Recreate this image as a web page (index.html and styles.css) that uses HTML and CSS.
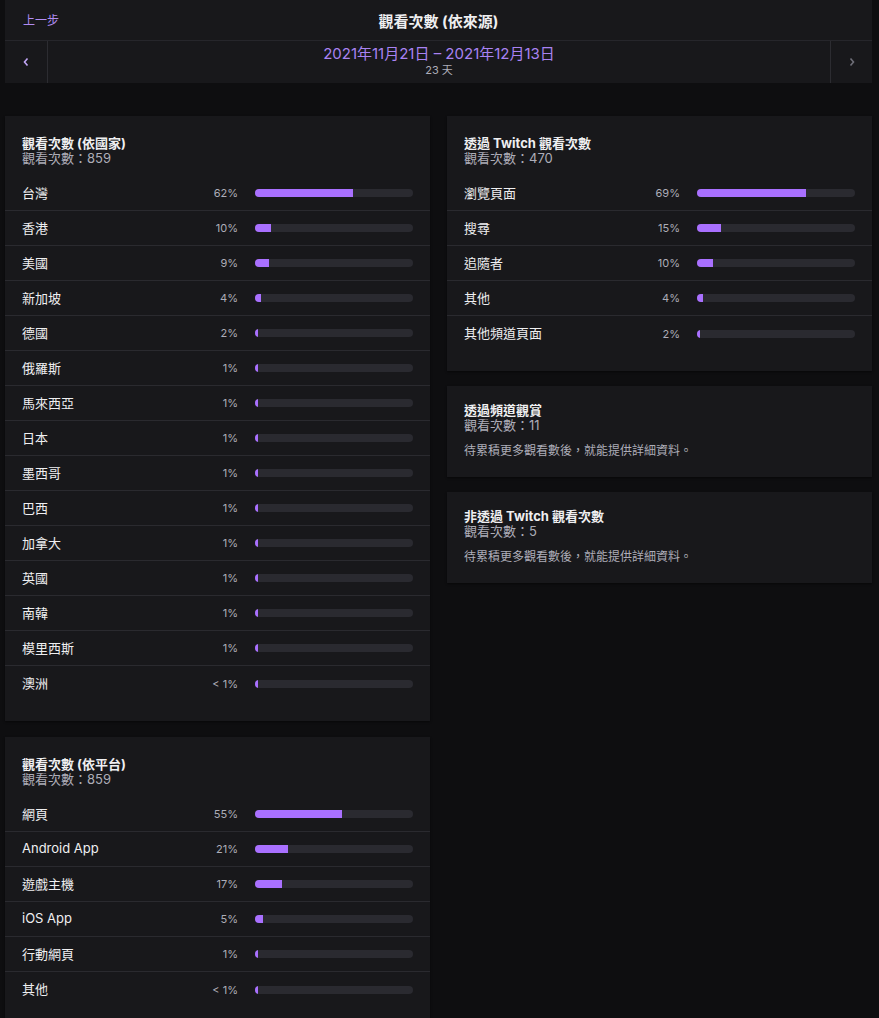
FILE: index.html
```html
<!DOCTYPE html>
<html lang="zh-Hant">
<head>
    <meta charset="UTF-8">
    <meta name="viewport" content="width=device-width, initial-scale=1.0">
    <title>觀看次數 (依來源)</title>
    <link rel="stylesheet" href="styles.css">
</head>
<body>
    <div class="page">
        <div class="topbar">
            <div class="title-row">
                <a class="back-link" href="#">上一步</a>
                <h1 class="page-title">觀看次數 (依來源)</h1>
                <span></span>
            </div>
            <div class="date-row">
                <button class="nav-btn">
                    <svg width="8" height="10" viewBox="0 0 8 10"><polyline points="5.5,1.5 2.5,5 5.5,8.5" fill="none" stroke="currentColor" stroke-width="1.6"/></svg>
                </button>
                <div class="date-range">
                    <div class="date-text">2021年11月21日 – 2021年12月13日</div>
                    <div class="date-days">23 天</div>
                </div>
                <button class="nav-btn disabled">
                    <svg width="8" height="10" viewBox="0 0 8 10"><polyline points="2.5,1.5 5.5,5 2.5,8.5" fill="none" stroke="currentColor" stroke-width="1.6"/></svg>
                </button>
            </div>
        </div>

        <div class="columns">
            <div class="column">
                <div class="card">
                    <div class="card-header">
                        <div class="card-title">觀看次數 (依國家)</div>
                        <div class="card-subtitle">觀看次數：859</div>
                    </div>
                    <div class="bar-list" id="by-country"></div>
                </div>
                <div class="card">
                    <div class="card-header">
                        <div class="card-title">觀看次數 (依平台)</div>
                        <div class="card-subtitle">觀看次數：859</div>
                    </div>
                    <div class="bar-list" id="by-platform"></div>
                </div>
            </div>

            <div class="column column-right">
                <div class="card">
                    <div class="card-header">
                        <div class="card-title">透過 Twitch 觀看次數</div>
                        <div class="card-subtitle">觀看次數：470</div>
                    </div>
                    <div class="bar-list" id="by-twitch"></div>
                </div>
                <div class="card info-card">
                    <div class="card-title">透過頻道觀賞</div>
                    <div class="card-subtitle">觀看次數：11</div>
                    <p class="card-note">待累積更多觀看數後，就能提供詳細資料。</p>
                </div>
                <div class="card info-card">
                    <div class="card-title">非透過 Twitch 觀看次數</div>
                    <div class="card-subtitle">觀看次數：5</div>
                    <p class="card-note">待累積更多觀看數後，就能提供詳細資料。</p>
                </div>
            </div>
        </div>
    </div>

    <script>
        const byCountry = [
            ['台灣', '62%', 62], ['香港', '10%', 10], ['美國', '9%', 9],
            ['新加坡', '4%', 4], ['德國', '2%', 2], ['俄羅斯', '1%', 1],
            ['馬來西亞', '1%', 1], ['日本', '1%', 1], ['墨西哥', '1%', 1],
            ['巴西', '1%', 1], ['加拿大', '1%', 1], ['英國', '1%', 1],
            ['南韓', '1%', 1], ['模里西斯', '1%', 1], ['澳洲', '< 1%', 0.5]
        ];
        const byTwitch = [
            ['瀏覽頁面', '69%', 69], ['搜尋', '15%', 15], ['追隨者', '10%', 10],
            ['其他', '4%', 4], ['其他頻道頁面', '2%', 2]
        ];
        const byPlatform = [
            ['網頁', '55%', 55], ['Android App', '21%', 21], ['遊戲主機', '17%', 17],
            ['iOS App', '5%', 5], ['行動網頁', '1%', 1], ['其他', '< 1%', 0.5]
        ];

        function renderBars(id, rows) {
            document.getElementById(id).innerHTML = rows.map(([label, pct, value]) => `
                <div class="bar-row">
                    <span class="bar-label">${label}</span>
                    <span class="bar-pct">${pct}</span>
                    <div class="bar-track"><div class="bar-fill" style="width: ${value}%"></div></div>
                </div>
            `).join('');
        }

        renderBars('by-country', byCountry);
        renderBars('by-twitch', byTwitch);
        renderBars('by-platform', byPlatform);
    </script>
</body>
</html>
```

FILE: styles.css
```css
body {
    font-family: Inter, 'Noto Sans CJK TC', sans-serif;
    background: #0e0e10;
    color: #efeff1;
    margin: 0;
}

.page {
    width: 867px;
    margin-left: 5px;
}

/* top bar */
.topbar {
    background: #18181b;
}

.title-row {
    display: grid;
    grid-template-columns: 1fr auto 1fr;
    align-items: center;
    height: 40px;
    padding: 0 18px;
    border-bottom: 1px solid #26262b;
}

.back-link {
    color: #b08cf2;
    font-size: 12px;
    text-decoration: none;
    margin-top: -2px;
}

.page-title {
    margin: 0;
    font-size: 15px;
    font-weight: bold;
    color: #efeff1;
}

.date-row {
    display: flex;
    height: 42px;
}

.nav-btn {
    width: 43px;
    background: none;
    border: none;
    border-right: 1px solid #2c2c31;
    color: #c2a6f7;
    padding: 0;
    display: flex;
    align-items: center;
    justify-content: center;
}

.nav-btn.disabled {
    border-right: none;
    border-left: 1px solid #2c2c31;
    width: 42px;
    color: #6e6e78;
}

.date-range {
    flex: 1;
    text-align: center;
    padding-top: 4px;
}

.date-text {
    color: #a983f2;
    font-size: 15px;
    line-height: 18px;
}

.date-days {
    color: #adadb8;
    font-size: 11px;
    line-height: 15px;
}

/* cards */
.columns {
    display: grid;
    grid-template-columns: 1fr 1fr;
    gap: 17px;
    margin-top: 33px;
    align-items: start;
}

.column {
    display: flex;
    flex-direction: column;
    gap: 16px;
}

.column-right {
    gap: 15px;
}

.card {
    background: #18181b;
    padding: 20px 0;
    box-shadow: 0 1px 2px rgba(0,0,0,0.5);
}

.card-header {
    padding: 0 17px;
    margin-bottom: 10px;
}

.card-title {
    font-size: 13px;
    font-weight: bold;
    line-height: 15px;
}

.card-subtitle {
    font-size: 13px;
    line-height: 15px;
    color: #adadb8;
}

.info-card {
    padding: 17px 17px 19px;
}

.card-note {
    margin: 11px 0 0;
    font-size: 12px;
    line-height: 14px;
    color: #adadb8;
}

/* bars */
.bar-row {
    display: grid;
    grid-template-columns: 1fr 60px 158px;
    column-gap: 17px;
    align-items: center;
    height: 35px;
    box-sizing: border-box;
    padding: 0 17px;
    border-bottom: 1px solid #2a2a2f;
}

.bar-row:last-child {
    border-bottom: none;
}

.bar-label {
    font-size: 13px;
    margin-top: -2px;
}

.bar-pct {
    font-size: 11px;
    color: #adadb8;
    text-align: right;
}

.bar-track {
    height: 8px;
    background: #2a2a30;
    border-radius: 4px;
    overflow: hidden;
}

.bar-fill {
    height: 100%;
    min-width: 3px;
    background: #a970ff;
}
```
